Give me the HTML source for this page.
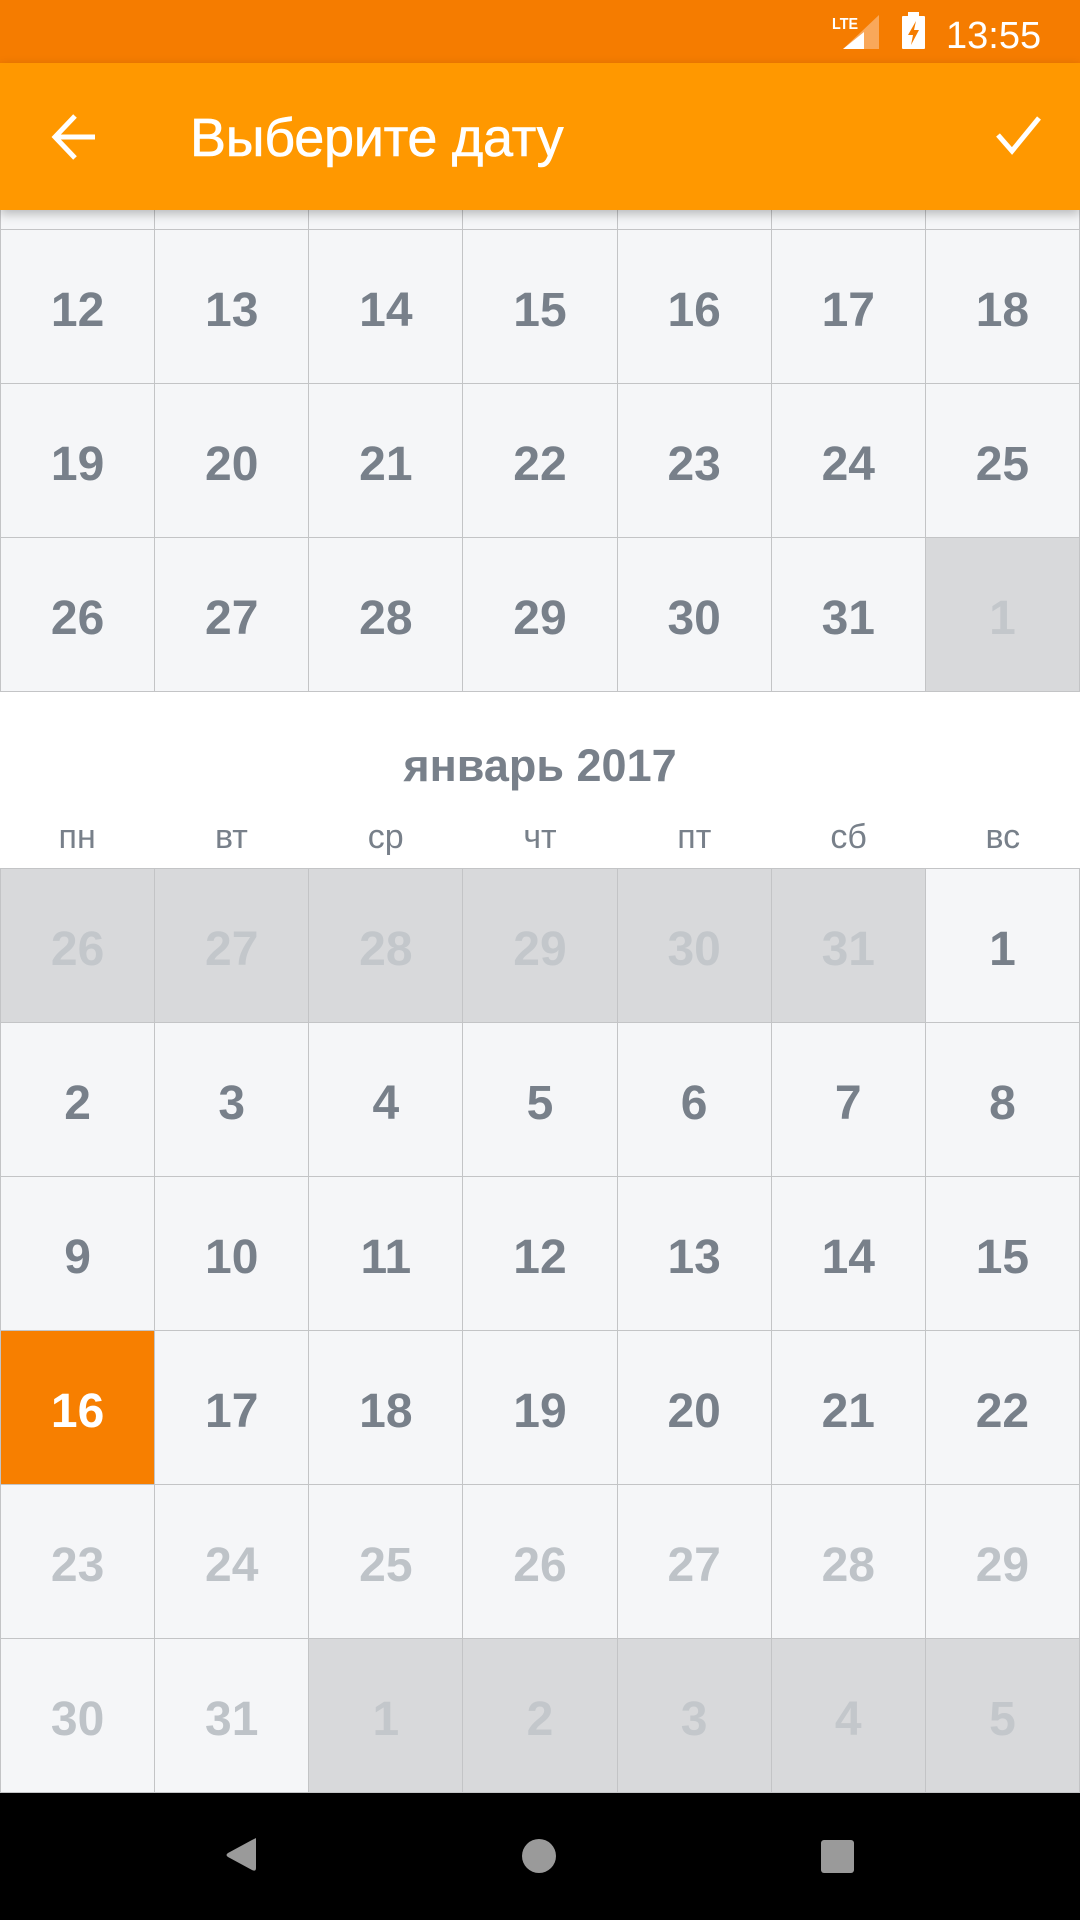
<!DOCTYPE html>
<html><head><meta charset="utf-8"><style>
*{margin:0;padding:0;box-sizing:border-box}
body{width:1080px;height:1920px;overflow:hidden;background:#fff;font-family:"Liberation Sans",sans-serif;position:relative}
.status{position:absolute;left:0;top:0;width:1080px;height:63px;background:#f57c00;z-index:5}
.bar{position:absolute;left:0;top:63px;width:1080px;height:147px;background:#ff9800;z-index:5;box-shadow:0 4px 10px rgba(0,0,0,0.25)}
.title{position:absolute;left:190px;top:110px;font-size:54px;color:#fff;line-height:56px;letter-spacing:-0.3px;-webkit-text-stroke:0.6px #fff}
.grid{position:absolute;left:0;width:1080px;display:grid;grid-template-columns:repeat(7,1fr);gap:1px;background:#c3c4c6;padding:1px 1px 1px 1px}
.grid div{background:#f5f6f8;height:153px;display:flex;align-items:center;justify-content:center;font-weight:bold;font-size:48px;color:#78808a;padding-top:8px}
.grid div.o{background:#d8d9db;color:#c3c7cb}
.grid div.f{color:#bec3c8}
.grid div.s{background:#f77f00;color:#fff}
.month{position:absolute;top:740px;left:0;width:1080px;text-align:center;font-weight:bold;font-size:45px;color:#78808a}
.wd{position:absolute;top:818px;left:0;width:1080px;display:grid;grid-template-columns:repeat(7,1fr);font-size:34px;color:#78808a;text-align:center}
.nav{position:absolute;left:0;top:1793px;width:1080px;height:127px;background:#000}
</style></head><body>
<div class="status">
<svg width="1080" height="63" style="position:absolute;left:0;top:0">
<text x="832" y="29" font-family="Liberation Sans" font-weight="bold" font-size="16" fill="#fff" textLength="26" lengthAdjust="spacingAndGlyphs">LTE</text>
<polygon points="879,15 879,49 843,49" fill="#f9a85a"/>
<polygon points="864,32 864,49 843,49" fill="#fff"/>
<rect x="902" y="16" width="23" height="33" rx="1" fill="#fff"/>
<rect x="908" y="12" width="11" height="5" fill="#fff"/>
<polygon points="916,21 908,35 913,35 911,45 919,30 914,30" fill="#f57c00"/>
<text x="946" y="48" font-family="Liberation Sans" font-size="38" fill="#fff">13:55</text>
</svg>
</div>
<div class="bar">
<svg width="1080" height="147" style="position:absolute;left:0;top:0">
<path d="M95 74 H55 M75 53 L55 74 L75 95" stroke="#fff" stroke-width="5" fill="none"/>
<path d="M998 72 L1012 88 L1039 55" stroke="#fff" stroke-width="5" fill="none"/>
</svg>
</div>
<div class="title" style="z-index:6">Выберите дату</div>

<div class="grid" style="top:75px">
<div>5</div><div>6</div><div>7</div><div>8</div><div>9</div><div>10</div><div>11</div>
<div>12</div><div>13</div><div>14</div><div>15</div><div>16</div><div>17</div><div>18</div>
<div>19</div><div>20</div><div>21</div><div>22</div><div>23</div><div>24</div><div>25</div>
<div>26</div><div>27</div><div>28</div><div>29</div><div>30</div><div>31</div><div class="o">1</div>
</div>

<div class="month">январь 2017</div>
<div class="wd"><span>пн</span><span>вт</span><span>ср</span><span>чт</span><span>пт</span><span>сб</span><span>вс</span></div>

<div class="grid" style="top:868px">
<div class="o">26</div><div class="o">27</div><div class="o">28</div><div class="o">29</div><div class="o">30</div><div class="o">31</div><div>1</div>
<div>2</div><div>3</div><div>4</div><div>5</div><div>6</div><div>7</div><div>8</div>
<div>9</div><div>10</div><div>11</div><div>12</div><div>13</div><div>14</div><div>15</div>
<div class="s">16</div><div>17</div><div>18</div><div>19</div><div>20</div><div>21</div><div>22</div>
<div class="f">23</div><div class="f">24</div><div class="f">25</div><div class="f">26</div><div class="f">27</div><div class="f">28</div><div class="f">29</div>
<div class="f">30</div><div class="f">31</div><div class="o">1</div><div class="o">2</div><div class="o">3</div><div class="o">4</div><div class="o">5</div>
</div>

<div class="nav">
<svg width="1080" height="127">
<path d="M256 45 L256 75 Q256 79 252 77 L228 64 Q225 62 228 60 L252 47 Q256 45 256 45 Z" fill="#9a9a9a"/>
<circle cx="539" cy="63" r="17" fill="#9a9a9a"/>
<rect x="821" y="47" width="33" height="33" rx="3" fill="#9a9a9a"/>
</svg>
</div>
</body></html>
